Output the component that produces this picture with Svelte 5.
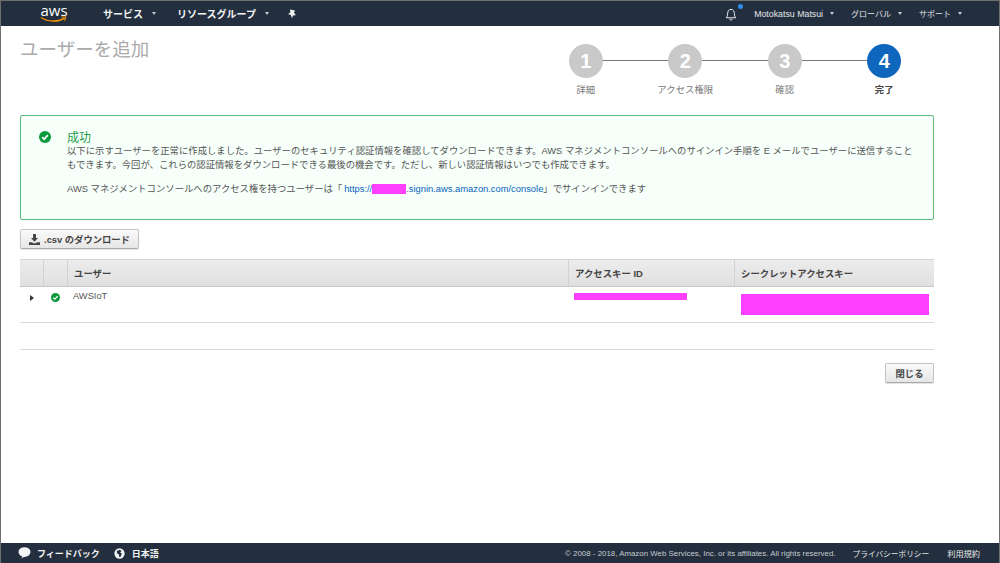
<script>
  const steps = [
    { n: 1, label: '詳細' },
    { n: 2, label: 'アクセス権限' },
    { n: 3, label: '確認' },
    { n: 4, label: '完了', active: true }
  ];
</script>

<div class="page">
  <header class="topbar">
    <div class="logo">
      <span class="logo-text">aws</span>
      <svg class="smile" viewBox="0 0 28 8" width="28" height="8" aria-hidden="true">
        <path d="M1 1.5c7 4.6 17 4.6 23 .8" fill="none" stroke="#f79400" stroke-width="1.4" />
        <path d="M21.5 1h4.2l-1.2 3.6" fill="none" stroke="#f79400" stroke-width="1.2" />
      </svg>
    </div>
    <span class="nav nav-first">サービス</span><i class="caret caret-a"></i>
    <span class="nav nav-second">リソースグループ</span><i class="caret caret-b"></i>
    <svg class="pin" viewBox="0 0 10 10" width="10" height="10" aria-hidden="true">
      <path d="M3 .6 8 1.6 7 3.6 8.8 6.2 5.8 6.4 5 9.6 3.8 6 1 5 3.4 3.4z" fill="#eef0f2" />
    </svg>
    <div class="bar-right">
      <span class="bell">
        <svg viewBox="0 0 14 16" width="12" height="14" aria-hidden="true">
          <path d="M1.4 12.4c1.2-1.2 1.6-2.2 1.6-4.6C3 4.8 4.6 2.6 7 2.6s4 2.2 4 5.2c0 2.4.4 3.4 1.6 4.6z" fill="none" stroke="#f0f2f4" stroke-width="1.1" stroke-linejoin="round" />
          <path d="M5.4 13.6c.2 1 .8 1.5 1.6 1.5s1.4-.5 1.6-1.5" fill="none" stroke="#f0f2f4" stroke-width="1.1" />
        </svg>
        <i class="dot"></i>
      </span>
      <span class="util user">Motokatsu Matsui</span><i class="caret small"></i>
      <span class="util global">グローバル</span><i class="caret small"></i>
      <span class="util support">サポート</span><i class="caret small"></i>
    </div>
  </header>

  <main class="content">
    <div class="head">
      <h1>ユーザーを追加</h1>
      <ol class="steps">
        {#each steps as step}
          <li class="step" class:active={step.active}>
            <span class="circle">{step.n}</span>
            <span class="step-label">{step.label}</span>
          </li>
        {/each}
      </ol>
    </div>

    <section class="alert">
      <svg class="ok ok-big" viewBox="0 0 12 12" width="12" height="12" aria-hidden="true">
        <circle cx="6" cy="6" r="6" fill="#0a9a3c" />
        <path d="M3.1 6.2 5.2 8.2 8.9 4.2" fill="none" stroke="#fff" stroke-width="1.7" />
      </svg>
      <div class="alert-body">
        <h2>成功</h2>
        <p>以下に示すユーザーを正常に作成しました。ユーザーのセキュリティ認証情報を確認してダウンロードできます。AWS マネジメントコンソールへのサインイン手順を E メールでユーザーに送信することもできます。今回が、これらの認証情報をダウンロードできる最後の機会です。ただし、新しい認証情報はいつでも作成できます。</p>
        <p class="signin">AWS マネジメントコンソールへのアクセス権を持つユーザーは「<span class="link">https://<span class="redact"></span>.signin.aws.amazon.com/console</span>」でサインインできます</p>
      </div>
    </section>

    <button class="btn btn-csv" type="button">
      <svg viewBox="0 0 12 12" width="11" height="11" aria-hidden="true">
        <path d="M4.4 0h3.2v4.4h2.2L6 8.4 2.2 4.4h2.2z M0 9h3.4l1.2 1h2.8l1.2-1H12v3H0z" fill="#444" />
      </svg>
      .csv のダウンロード
    </button>

    <div class="table">
      <div class="row thead">
        <div class="cell c-toggle"></div>
        <div class="cell c-status"></div>
        <div class="cell c-user">ユーザー</div>
        <div class="cell c-key">アクセスキー ID</div>
        <div class="cell c-secret">シークレットアクセスキー</div>
      </div>
      <div class="row tbody">
        <div class="cell c-toggle"><i class="tri"></i></div>
        <div class="cell c-status">
          <svg viewBox="0 0 12 12" width="9" height="9" aria-hidden="true">
            <circle cx="6" cy="6" r="6" fill="#0a9a3c" />
            <path d="M3.1 6.2 5.2 8.2 8.9 4.2" fill="none" stroke="#fff" stroke-width="1.8" />
          </svg>
        </div>
        <div class="cell c-user">AWSIoT</div>
        <div class="cell c-key"><div class="mask-key"></div></div>
        <div class="cell c-secret"><div class="mask-secret"></div></div>
      </div>
    </div>

    <hr class="rule" />

    <div class="actions">
      <button class="btn btn-close" type="button">閉じる</button>
    </div>
  </main>

  <footer class="footer">
    <svg class="f-icon" viewBox="0 0 13 12" width="13" height="12" aria-hidden="true">
      <ellipse cx="6.5" cy="5" rx="6" ry="4.8" fill="#f4f5f6" />
      <path d="M5 9 3 11.6 8 9z" fill="#f4f5f6" />
    </svg>
    <span class="f-strong feedback">フィードバック</span>
    <svg class="f-icon globe" viewBox="0 0 12 12" width="11" height="11" aria-hidden="true">
      <circle cx="6" cy="6" r="5.6" fill="#f0f1f3" />
      <path d="M3 3.2 6.4 1.8 8.2 3.2 6.6 5 8.6 6 7.4 9.4 5.8 10 5.4 7 3.4 5.6z" fill="#232f3e" />
    </svg>
    <span class="f-strong lang">日本語</span>
    <div class="f-right">
      <span class="copy">© 2008 - 2018, Amazon Web Services, Inc. or its affiliates. All rights reserved.</span>
      <span class="f-link privacy">プライバシーポリシー</span>
      <span class="f-link terms">利用規約</span>
    </div>
  </footer>
</div>

<style>
  :global(body) {
    margin: 0;
    background: #fff;
  }

  .page {
    width: 1000px;
    height: 563px;
    box-sizing: border-box;
    display: flex;
    flex-direction: column;
    overflow: hidden;
    border: 1px solid #6e6e6e;
    border-bottom: 0;
    font-family: "Liberation Sans", "Noto Sans CJK JP", sans-serif;
    color: #444;
  }

  .topbar {
    height: 25px;
    flex: none;
    display: flex;
    align-items: center;
    background: #232f3e;
    color: #f2f3f4;
  }

  .logo {
    width: 30px;
    margin-left: 38px;
    display: flex;
    flex-direction: column;
    align-items: center;
    height: 25px;
  }

  .logo-text {
    font-family: "Open Sans", sans-serif;
    font-size: 15px;
    line-height: 14px;
    margin-top: 2px;
    color: #fff;
  }

  .smile {
    margin-top: -1px;
  }

  .nav {
    font-size: 10px;
    font-weight: 700;
  }

  .nav-first {
    margin-left: 34px;
  }

  .nav-second {
    margin-left: 21px;
  }

  .caret {
    width: 0;
    height: 0;
    border: 2.5px solid transparent;
    border-top: 3px solid #c8ccd1;
    border-bottom: 0;
    margin-left: 9px;
  }

  .pin {
    margin-left: 18px;
  }

  .bar-right {
    margin-left: auto;
    display: flex;
    align-items: center;
    padding-right: 37px;
  }

  .bell {
    position: relative;
    width: 12px;
    height: 14px;
    margin-right: 17px;
  }

  .bell svg {
    display: block;
  }

  .dot {
    position: absolute;
    top: -3px;
    right: -6px;
    width: 5px;
    height: 5px;
    border-radius: 50%;
    background: #2f8df0;
  }

  .util {
    font-size: 8px;
    color: #e4e6e9;
  }

  .user {
    font-size: 8.8px;
  }

  .global {
    margin-left: 17px;
  }

  .support {
    margin-left: 17px;
  }

  .caret.small {
    margin-left: 7px;
  }

  .content {
    flex: 1;
    padding: 0 65px 0 19px;
  }

  .head {
    display: flex;
    justify-content: space-between;
    height: 89px;
  }

  h1 {
    margin: 14px 0 0;
    font-size: 18.5px;
    line-height: 20px;
    font-weight: 400;
    color: #aaa;
  }

  .steps {
    list-style: none;
    display: flex;
    margin: 18px 0 0;
    padding: 0;
  }

  .step {
    position: relative;
    width: 99.5px;
    display: flex;
    flex-direction: column;
    align-items: center;
  }

  .step:not(:last-child)::after {
    content: "";
    position: absolute;
    top: 16px;
    left: 50%;
    width: 100%;
    height: 1px;
    background: #777;
  }

  .circle {
    position: relative;
    z-index: 1;
    width: 34px;
    height: 34px;
    border-radius: 50%;
    background: #c9c9c9;
    color: #fff;
    font-size: 20px;
    font-weight: 700;
    line-height: 34px;
    text-align: center;
  }

  .step.active .circle {
    background: #0f66bd;
  }

  .step-label {
    margin-top: 5px;
    font-size: 9.4px;
    line-height: 14px;
    color: #777;
  }

  .step.active .step-label {
    color: #444;
    font-weight: 700;
  }

  .alert {
    box-sizing: border-box;
    height: 105px;
    display: flex;
    border: 1px solid #5cb97a;
    border-radius: 2px;
    background: #f6fff9;
    padding: 15px 15px 0 18px;
  }

  .ok-big {
    flex: none;
  }

  .alert-body {
    margin-left: 16px;
    flex: 1;
    min-width: 0;
  }

  h2 {
    margin: 1px 0 0;
    font-size: 12px;
    line-height: 12px;
    font-weight: 400;
    color: #1f9d48;
  }

  .alert p {
    margin: 0;
    font-size: 9.36px;
    line-height: 14px;
    color: #555;
  }

  .alert p.signin {
    margin-top: 10px;
  }

  .link {
    margin-left: 2px;
    color: #0b64c0;
  }

  .redact {
    display: inline-block;
    width: 34px;
    height: 10px;
    vertical-align: -2px;
    background: #ff40ff;
  }

  .btn {
    display: flex;
    align-items: center;
    justify-content: center;
    height: 20px;
    padding: 0;
    border: 1px solid #c4c4c4;
    border-bottom-color: #aaa;
    border-radius: 2px;
    background: linear-gradient(#fafafa, #e6e6e6);
    box-shadow: 0 1px 1px rgba(0, 0, 0, 0.12);
    font: 700 9.3px "Liberation Sans", "Noto Sans CJK JP", sans-serif;
    color: #444;
  }

  .btn-csv {
    width: 119px;
    margin-top: 9px;
    gap: 4px;
  }

  .table {
    margin-top: 10px;
  }

  .row {
    display: flex;
  }

  .thead {
    height: 28px;
    box-sizing: border-box;
    border-top: 1px solid #d5d5d5;
    border-bottom: 1px solid #c6c6c6;
    background: linear-gradient(#ececec, #e0e0e0);
    font-size: 9.4px;
    font-weight: 700;
    color: #444;
  }

  .thead .cell {
    display: flex;
    align-items: center;
    border-left: 1px solid #d2d2d2;
  }

  .thead .cell:first-child {
    border-left: 0;
  }

  .tbody {
    height: 35px;
    border-bottom: 1px solid #d8d8d8;
    font-size: 9.3px;
    color: #555;
  }

  .cell {
    box-sizing: border-box;
    padding-left: 6px;
  }

  .c-toggle {
    width: 23px;
  }

  .c-status {
    width: 24px;
  }

  .c-user {
    width: 501px;
  }

  .c-key {
    width: 166px;
  }

  .c-secret {
    width: 199px;
  }

  .tbody .c-toggle {
    padding: 8px 0 0 10px;
  }

  .tbody .c-status {
    padding: 6px 0 0 8px;
  }

  .tbody .c-status svg {
    display: block;
  }

  .tbody .c-user {
    padding-top: 4px;
  }

  .tri {
    display: block;
    width: 0;
    height: 0;
    border: 3px solid transparent;
    border-left: 4px solid #333;
    border-right: 0;
  }

  .mask-key {
    width: 113px;
    height: 7px;
    margin-top: 6px;
    background: #ff40ff;
  }

  .mask-secret {
    width: 188px;
    height: 21px;
    margin: 7px 0 0 1px;
    background: #ff40ff;
  }

  .rule {
    margin: 26px 0 0;
    border: 0;
    border-top: 1px solid #d8d8d8;
  }

  .actions {
    display: flex;
    justify-content: flex-end;
    margin-top: 13px;
  }

  .btn-close {
    width: 49px;
  }

  .footer {
    height: 20px;
    flex: none;
    display: flex;
    align-items: center;
    background: #232f3e;
    padding-left: 17px;
    color: #f2f3f4;
    font-size: 9px;
  }

  .f-strong {
    font-weight: 700;
    margin-left: 6px;
  }

  .feedback {
    margin-right: 14px;
  }

  .lang {
    margin-left: 7px;
  }

  .f-right {
    margin-left: auto;
    display: flex;
    align-items: center;
    padding-right: 19px;
  }

  .copy {
    font-size: 7.9px;
    color: #c6cbd1;
  }

  .f-link {
    font-size: 7.7px;
    color: #e6e8ea;
  }

  .privacy {
    margin-left: 17px;
  }

  .terms {
    margin-left: 18px;
    font-size: 8.2px;
  }
</style>
